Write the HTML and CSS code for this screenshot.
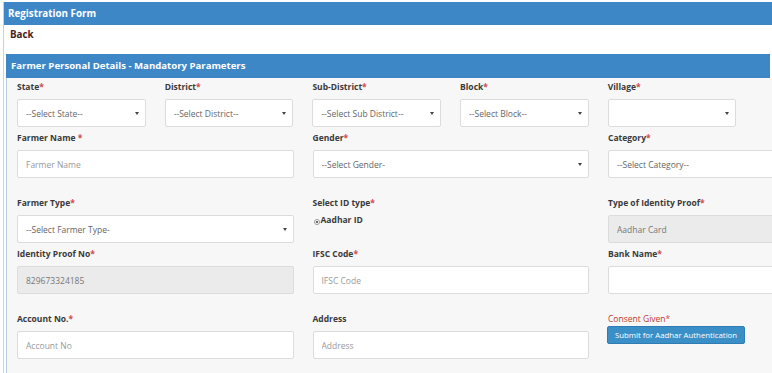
FILE: index.html
```html
<!DOCTYPE html>
<html lang="en">
<head>
    <meta charset="UTF-8">
    <title>Registration Form</title>
    <link rel="stylesheet" href="styles.css">
</head>
<body>
    <div class="page">
        <div class="bar">Registration Form</div>
        <div class="back"><a href="#">Back</a></div>
        <section class="panel">
            <div class="panel-head">Farmer Personal Details - Mandatory Parameters</div>
            <div class="panel-body">
                <div class="row row-small row-a">
                    <div class="field">
                        <label>State<span class="req">*</span></label>
                        <div class="select"><select><option>--Select State--</option></select></div>
                    </div>
                    <div class="field">
                        <label>District<span class="req">*</span></label>
                        <div class="select"><select><option>--Select District--</option></select></div>
                    </div>
                    <div class="field">
                        <label>Sub-District<span class="req">*</span></label>
                        <div class="select"><select><option>--Select Sub District--</option></select></div>
                    </div>
                    <div class="field">
                        <label>Block<span class="req">*</span></label>
                        <div class="select"><select><option>--Select Block--</option></select></div>
                    </div>
                    <div class="field">
                        <label>Village<span class="req">*</span></label>
                        <div class="select"><select><option></option></select></div>
                    </div>
                </div>
                <div class="row row-wide row-b">
                    <div class="field">
                        <label>Farmer Name <span class="req">*</span></label>
                        <input type="text" placeholder="Farmer Name">
                    </div>
                    <div class="field">
                        <label>Gender<span class="req">*</span></label>
                        <div class="select"><select><option>--Select Gender-</option></select></div>
                    </div>
                    <div class="field">
                        <label>Category<span class="req">*</span></label>
                        <div class="select"><select><option>--Select Category--</option></select></div>
                    </div>
                </div>
                <div class="row row-wide row-a">
                    <div class="field">
                        <label>Farmer Type<span class="req">*</span></label>
                        <div class="select"><select><option>--Select Farmer Type-</option></select></div>
                    </div>
                    <div class="field">
                        <label>Select ID type<span class="req">*</span></label>
                        <div class="radio"><input type="radio" name="idtype" checked>Aadhar ID</div>
                    </div>
                    <div class="field">
                        <label>Type of Identity Proof<span class="req">*</span></label>
                        <input type="text" value="Aadhar Card" readonly class="locked">
                    </div>
                </div>
                <div class="row row-wide row-b">
                    <div class="field">
                        <label>Identity Proof No<span class="req">*</span></label>
                        <input type="text" value="829673324185" readonly class="locked">
                    </div>
                    <div class="field">
                        <label>IFSC Code<span class="req">*</span></label>
                        <input type="text" placeholder="IFSC Code">
                    </div>
                    <div class="field">
                        <label>Bank Name<span class="req">*</span></label>
                        <input type="text">
                    </div>
                </div>
                <div class="row row-wide">
                    <div class="field">
                        <label>Account No.<span class="req">*</span></label>
                        <input type="text" placeholder="Account No">
                    </div>
                    <div class="field">
                        <label>Address</label>
                        <input type="text" placeholder="Address">
                    </div>
                    <div class="field">
                        <label class="consent">Consent Given<span class="req">*</span></label>
                        <button class="btn">Submit for Aadhar Authentication</button>
                    </div>
                </div>
            </div>
        </section>
    </div>
</body>
</html>
```

FILE: styles.css
```css
html, body {
    margin: 0;
    overflow: hidden;
    background: #fff;
}

body {
    font-family: "Open Sans", "Liberation Sans", sans-serif;
    color: #333;
}

.page {
    margin: 2px 0 0 3px;
    border-left: 1px solid #c7d3de;
    height: 380px;
}

.bar {
    height: 23px;
    line-height: 23px;
    padding-left: 4px;
    background: #3d87c7;
    color: #fff;
    font-size: 9.8px;
    font-weight: 700;
}

.back {
    height: 26px;
    padding: 3px 0 0 6px;
    line-height: 14px;
    font-size: 9.8px;
    font-weight: 700;
}

.back a {
    color: #4b1d1d;
    text-decoration: none;
}

.panel {
    margin-left: 2px;
    width: 766px;
    overflow: hidden;
}

.panel-head {
    height: 24px;
    line-height: 24px;
    margin-right: 2px;
    padding-left: 5px;
    background: #3d87c7;
    color: #fff;
    font-size: 9.6px;
    font-weight: 700;
}

.panel-body {
    background: #f7f7f7;
    border-left: 1px solid #b9cfe3;
    padding: 2px 0 20px 10px;
    width: 1000px;
}

.row {
    display: flex;
}

.row-a {
    margin-bottom: 4px;
}

.row-b {
    margin-bottom: 18px;
}

.row-small .field {
    width: 147.7px;
}

.row-wide .field {
    width: 295.5px;
}

.field {
    display: flex;
    flex-direction: column;
    align-items: flex-start;
}

.field label {
    line-height: 14px;
    margin-bottom: 5px;
    font-size: 8.5px;
    font-weight: 700;
    color: #3a3a3a;
}

.req {
    color: #d14a4a;
}

.field > input[type=text],
.select {
    box-sizing: border-box;
    height: 28px;
    width: calc(100% - 19px);
}

.field > input[type=text],
.select select {
    box-sizing: border-box;
    height: 28px;
    margin: 0;
    padding: 0 8px;
    border: 1px solid #dcdcdc;
    border-radius: 2px;
    background: #fff;
    font-family: inherit;
    font-size: 8.5px;
    color: #555;
    outline: none;
}

.field input::placeholder {
    color: #999;
}

.field input.locked {
    background: #ebebeb;
    color: #777;
}

.select {
    position: relative;
}

.select select {
    width: 100%;
    appearance: none;
    -webkit-appearance: none;
    color: #666;
}

.select::after {
    content: "";
    position: absolute;
    right: 7px;
    top: 13px;
    border-left: 2px solid transparent;
    border-right: 2px solid transparent;
    border-top: 3px solid #444;
}

.radio {
    display: flex;
    align-items: center;
    margin-top: -2px;
    line-height: 14px;
    font-size: 8.5px;
    font-weight: 700;
    color: #3a3a3a;
}

.radio input {
    appearance: none;
    -webkit-appearance: none;
    box-sizing: border-box;
    width: 6px;
    height: 6px;
    margin: 3px 1px 0 1px;
    border: 1px solid #999;
    border-radius: 50%;
    background: radial-gradient(circle, #666 0 1.2px, #fff 1.5px);
}

.field label.consent {
    margin-bottom: 0;
    font-weight: 400;
    color: #c0392b;
}

.btn {
    height: 18px;
    width: 138px;
    padding: 0;
    margin-left: -1px;
    border: 1px solid #2f7db3;
    border-radius: 2px;
    background: #3a8fc7;
    color: #fff;
    font-family: inherit;
    font-size: 7.8px;
}
```
